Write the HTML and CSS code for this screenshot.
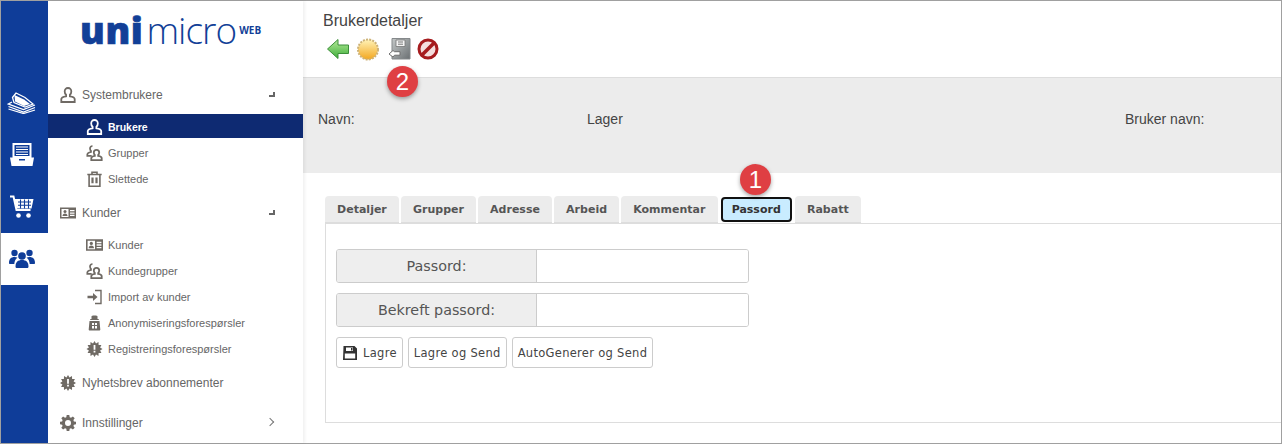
FILE: index.html
```html
<!DOCTYPE html>
<html lang="no">
<head>
<meta charset="utf-8">
<title>Brukerdetaljer</title>
<link rel="stylesheet" href="styles.css">
</head>
<body>
<svg class="defs" width="0" height="0" aria-hidden="true">
  <defs>
    <symbol id="i-user" viewBox="0 0 16 16"><path d="M8 1c-2.100 0-3.300 1.500-3.300 3.400 0 1.500.6 2.700 1.400 3.400v1.500c-2 .3-4.800.9-4.800 2.800v2.900h13.400v-2.900c0-1.900-2.800-2.500-4.800-2.800V7.800c.8-.7 1.400-1.900 1.400-3.400C11.300 2.500 10.100 1 8 1z" fill="none" stroke="currentColor" stroke-width="1.800"/></symbol>
    <symbol id="i-group" viewBox="0 0 16 16"><path d="M6 1c-1.600 0-2.500 1.100-2.500 2.600 0 1 .4 1.900 1 2.400v1C3 7.300 .8 7.900.8 9.500v1.300h4.400" fill="none" stroke="currentColor" stroke-width="1.700"/><path d="M10 4.800c-1.700 0-2.700 1.200-2.700 2.700 0 1.100.4 2 1 2.500v.9c-1.600.3-3.500.8-3.500 2.300v1.900h10.400v-1.900c0-1.500-1.900-2-3.500-2.300V10c.6-.5 1-1.400 1-2.500C12.700 6 11.700 4.800 10 4.800z" fill="none" stroke="currentColor" stroke-width="1.800"/></symbol>
    <symbol id="i-trash" viewBox="0 0 16 16"><path d="M.8 3.500h14.400M5.500 3.500V1.200h5v2.300M2.600 3.500v11.700h10.800V3.500" fill="none" stroke="currentColor" stroke-width="1.600"/><path d="M6 6.500v5.800M10 6.500v5.800" stroke="currentColor" stroke-width="2.200"/></symbol>
    <symbol id="i-card" viewBox="0 0 16 12"><path fill="currentColor" fill-rule="evenodd" d="M0 .5h16v11H0zM1.500 2v8h7V2zM10 3v1.300h4.500V3zm0 2.400v1.300h4.500V5.400zm0 2.400v1.300h4.500V7.800z"/><circle cx="5" cy="4.500" r="1.500" fill="currentColor"/><path fill="currentColor" d="M2.500 9c0-1.600 1-2.500 2.500-2.500S7.500 7.400 7.500 9z"/></symbol>
    <symbol id="i-import" viewBox="0 0 16 16"><path d="M8.500 1.500h6v13h-6" fill="none" stroke="currentColor" stroke-width="1.400"/><path fill="currentColor" d="M1 6.800h5.500V4L11 8l-4.500 4V9.200H1z"/></symbol>
    <symbol id="i-anon" viewBox="0 0 16 16"><path fill="currentColor" fill-rule="evenodd" d="M5 1.500C5 .7 6 .500 8 .500s3 .2 3 1V4h1l.5 1H3.500L4 4h1zM3 6h10l.8 8.500c0 .6-.5 1-1 1H3.200c-.5 0-1-.4-1-1zM5.500 8v2h2V8zm3 0v2h2V8zm-3 3v2.500h2V11zm3 0v2.500h2V11z"/></symbol>
    <symbol id="i-badge" viewBox="0 0 16 16"><path fill="currentColor" fill-rule="evenodd" d="M8 0L9.500 2.400 12 1.070 12.100 3.900 14.930 4 13.600 6.500 16 8 13.600 9.500 14.930 12 12.100 12.100 12 14.930 9.500 13.600 8 16 6.500 13.600 4 14.930 3.900 12.100 1.070 12 2.400 9.500 0 8 2.400 6.500 1.070 4 3.900 3.900 4 1.070 6.500 2.400zM7.100 4v4.800h1.800V4zm0 5.700v1.900h1.800V9.700z"/></symbol>
    <symbol id="i-gear" viewBox="0 0 16 16"><path fill="currentColor" fill-rule="evenodd" d="M6.700 0h2.600l.4 2.200 1.300.5L12.900 1.400l1.800 1.800-1.300 1.900.5 1.300 2.100.3v2.600l-2.100.4-.5 1.300 1.300 1.800-1.800 1.800-1.900-1.300-1.300.5-.4 2.200H6.700l-.4-2.200-1.300-.5-1.900 1.300-1.800-1.800 1.300-1.800-.5-1.300L0 9.300V6.700l2.100-.3.500-1.300-1.300-1.900 1.800-1.800L5 2.700l1.300-.5zM8 5a3 3 0 1 0 0 6 3 3 0 0 0 0-6z"/></symbol>
  </defs>
</svg>
<div class="app">
  <nav class="rail">
    <div class="rail-item rail-first">
      <svg class="rail-icon" viewBox="0 0 30 22" width="30" height="22"><path d="M9 1l9 4.500 8 6.500-8 3L7 10.500 5.500 5.500z" fill="none" stroke="#fff" stroke-width="1.300"/><path d="M7.500 3l9.500 4.500 6 4.500-6 2L8 9.500z" fill="#fff"/><path d="M5 10L1.500 12l15 5.500L28 13M1.500 14.500l15 5.500L28 15.500M1.500 17l15 4.500L28 18" fill="none" stroke="#fff" stroke-width="1.300"/></svg>
    </div>
    <div class="rail-item">
      <svg class="rail-icon" viewBox="0 0 24 24" width="24" height="24"><path d="M3.500 1h17v13h-17z" fill="none" stroke="#fff" stroke-width="2"/><path d="M6 4h12M6 6.500h12M6 9h12M6 11.500h12" stroke="#fff" stroke-width="1.200"/><path d="M0 14.500h24l-1.500 8.500H1.500z" fill="#fff"/><path d="M9 16h6v1.500H9z" fill="#0f3d99"/></svg>
    </div>
    <div class="rail-item">
      <svg class="rail-icon" viewBox="0 0 24 24" width="24" height="24"><path d="M0 1.500h3.500l3 13.500h14" fill="none" stroke="#fff" stroke-width="2"/><path d="M4.500 4h19l-2 9.500h-15z" fill="#fff"/><path d="M8 7h13M8 10.300h13M10.500 4.500v9M14.500 4.500v9M18.500 4.500v9" stroke="#0f3d99" stroke-width="1.100"/><circle cx="8.500" cy="20.500" r="2.300" fill="#fff"/><circle cx="18.500" cy="20.500" r="2.300" fill="#fff"/></svg>
    </div>
    <div class="rail-item rail-active">
      <svg class="rail-icon" viewBox="0 0 26 20" width="26" height="20"><g fill="#0f3d99"><circle cx="5.500" cy="4" r="3.200"/><circle cx="20.500" cy="4" r="3.200"/><path d="M0 14c0-4 2-6 5.500-6 1.300 0 2.300.3 3 .8C6.500 10 5.500 12 5.300 15H1c-.6 0-1-.4-1-1zM26 14c0-4-2-6-5.500-6-1.300 0-2.300.3-3 .8 2 1.200 3 3.200 3.200 6.200H25c.6 0 1-.4 1-1z"/><circle cx="13" cy="7" r="3.800"/><path d="M6.500 17.500c0-4.500 2.500-6.500 6.500-6.500s6.500 2 6.500 6.500c0 1-.6 1.500-1.500 1.500H8c-.9 0-1.500-.5-1.500-1.500z"/></g></svg>
    </div>
  </nav>
  <aside class="sidebar">
    <div class="logo"><span class="logo-uni">uni</span><span class="logo-micro">micro</span><span class="logo-web">WEB</span></div>
    <ul class="menu">
      <li class="group g1"><svg class="ico"><use href="#i-user"/></svg><span>Systembrukere</span><i class="corner"></i></li>
      <li class="sub active"><svg class="ico-s"><use href="#i-user"/></svg><span>Brukere</span></li>
      <li class="sub"><svg class="ico-s"><use href="#i-group"/></svg><span>Grupper</span></li>
      <li class="sub"><svg class="ico-s"><use href="#i-trash"/></svg><span>Slettede</span></li>
      <li class="group g2"><svg class="ico"><use href="#i-card"/></svg><span>Kunder</span><i class="corner"></i></li>
      <li class="sub"><svg class="ico-s"><use href="#i-card"/></svg><span>Kunder</span></li>
      <li class="sub"><svg class="ico-s"><use href="#i-group"/></svg><span>Kundegrupper</span></li>
      <li class="sub"><svg class="ico-s"><use href="#i-import"/></svg><span>Import av kunder</span></li>
      <li class="sub"><svg class="ico-s"><use href="#i-anon"/></svg><span>Anonymiseringsforespørsler</span></li>
      <li class="sub"><svg class="ico-s"><use href="#i-badge"/></svg><span>Registreringsforespørsler</span></li>
      <li class="group g3"><svg class="ico"><use href="#i-badge"/></svg><span>Nyhetsbrev abonnementer</span></li>
      <li class="group g4"><svg class="ico"><use href="#i-gear"/></svg><span>Innstillinger</span><i class="chev"></i></li>
    </ul>
  </aside>
  <main class="main">
    <header class="head">
      <h1>Brukerdetaljer</h1>
      <div class="tools">
        <svg class="tool" viewBox="0 0 24 24" width="24" height="24"><defs><linearGradient id="gg" x1="0" y1="0" x2="0" y2="1"><stop offset="0" stop-color="#b4ea98"/><stop offset="1" stop-color="#3fae3a"/></linearGradient></defs><path d="M1.500 12L12 2.500V8h10.500v8.500H12v5z" fill="url(#gg)" stroke="#3c8f3a"/></svg>
        <svg class="tool" viewBox="0 0 24 24" width="24" height="24"><defs><linearGradient id="yy" x1="0" y1="0" x2="0" y2="1"><stop offset="0" stop-color="#fff3b8"/><stop offset="1" stop-color="#f3a71f"/></linearGradient></defs><circle cx="12" cy="12.500" r="10" fill="url(#yy)" stroke="#cdb277" stroke-width="2" stroke-dasharray="2 1.200"/></svg>
        <svg class="tool tool-safe" viewBox="0 0 24 24" width="24" height="24"><defs><linearGradient id="sg" x1="0" y1="0" x2="1" y2="1"><stop offset="0" stop-color="#c4c8c8"/><stop offset="1" stop-color="#6a6f72"/></linearGradient></defs><path d="M4 1.500h18v20.500H4z" fill="url(#sg)" stroke="#85898b"/><path d="M8 3h9v6.500H8z" fill="#f4f4f4" stroke="#777" stroke-width=".8"/><path d="M10 5h5M10 7.200h5" stroke="#777"/><path d="M1 17l4-3.500 1.500 1.200h5.500v3.500H6.500L5 20z" fill="#fff" stroke="#6e6e6e"/></svg>
        <svg class="tool" viewBox="0 0 24 24" width="24" height="24"><circle cx="12" cy="12" r="9" fill="#f4dede" stroke="#a61c1f" stroke-width="3"/><path d="M5.500 18.500L18.500 5.500" stroke="#a61c1f" stroke-width="3.500"/></svg>
      </div>
    </header>
    <section class="info">
      <span class="f-navn">Navn:</span>
      <span class="f-lager">Lager</span>
      <span class="f-bruker">Bruker navn:</span>
    </section>
    <section class="content">
      <div class="tabs">
        <span class="tab">Detaljer</span>
        <span class="tab">Grupper</span>
        <span class="tab">Adresse</span>
        <span class="tab">Arbeid</span>
        <span class="tab">Kommentar</span>
        <span class="tab tab-active">Passord</span>
        <span class="tab">Rabatt</span>
      </div>
      <div class="panel">
        <div class="field"><label class="field-label">Passord:</label><input class="field-input" type="password"></div>
        <div class="field"><label class="field-label">Bekreft passord:</label><input class="field-input" type="password"></div>
        <div class="buttons">
          <button class="btn" type="button"><svg class="floppy" viewBox="0 0 16 16" width="16" height="16"><path fill="#333" fill-rule="evenodd" d="M1.500 1h11L15 3.500V15H1zM4 2.500V6h7V2.500zM9 3h1.500v2.500H9zM2.800 8.500v5h10.400v-5z"/></svg>Lagre</button>
          <button class="btn" type="button">Lagre og Send</button>
          <button class="btn" type="button">AutoGenerer og Send</button>
        </div>
      </div>
    </section>
  </main>
</div>
<span class="marker m1">1</span>
<span class="marker m2">2</span>
</body>
</html>
```
FILE: styles.css
```css
* { box-sizing: border-box; }
html, body { margin: 0; padding: 0; }
body { width: 1282px; height: 444px; overflow: hidden; background: #fff; font-family: "Liberation Sans", Arial, sans-serif; position: relative; }
.defs { position: absolute; }
.app { display: flex; width: 1282px; height: 444px; border: 1px solid #a0a0a0; }
.rail { width: 47px; flex: none; background: #0f3d99; padding-top: 75px; display: flex; flex-direction: column; }
.rail-item { height: 52px; padding-right: 5px; display: flex; align-items: center; justify-content: center; }
.rail-first { height: 53px; }
.rail-active { background: #fff; }
.sidebar { width: 255px; flex: none; background: #fff; box-shadow: 2px 0 3px rgba(0,0,0,.06); z-index: 1; }
.logo { height: 80px; padding: 8px 0 0 32px; display: flex; align-items: flex-start; color: #123f97; white-space: nowrap; }
.logo-uni { font: 800 37px/42px "Open Sans", sans-serif; letter-spacing: .6px; -webkit-text-stroke: .7px #123f97; }
.logo-micro { font: 300 37px/42px "Open Sans", sans-serif; letter-spacing: -1px; margin-left: 3px; }
.logo-web { font: 700 10px/12px "Open Sans", sans-serif; margin: 15px 0 0 3px; }
.menu { list-style: none; margin: 0; padding: 0; color: #666; }
.menu li { display: flex; align-items: center; position: relative; }
.group { height: 28px; padding-left: 12px; font-size: 12px; }
.group span { margin-left: 6px; }
.sub { height: 26px; padding-left: 38px; font-size: 11px; }
.sub span { margin-left: 5px; }
.g1 { margin-bottom: 5px; }
.g2 { margin-top: 7px; margin-bottom: 5px; }
.g3 { margin-top: 7px; }
.g4 { margin-top: 12px; }
.ico { width: 16px; height: 16px; color: #6f6a64; flex: none; }
.ico-s { width: 17px; height: 16px; color: #6f6a64; flex: none; }
.active { background: #0e2a72; color: #fff; font-weight: 700; font-size: 10.500px; height: 24px; padding-top: 1px; margin-bottom: 2px; }
.active .ico-s { color: #fff; }
.corner { position: absolute; left: 221px; top: 11px; width: 6px; height: 5px; border-right: 2px solid #666; border-bottom: 2px solid #666; }
.chev { position: absolute; left: 219px; top: 10px; width: 6px; height: 6px; border-top: 1.500px solid #777; border-right: 1.500px solid #777; transform: rotate(45deg); }
.main { flex: 1; min-width: 0; background: #fff; }
.head { height: 76px; padding: 11px 0 0 20px; }
h1 { margin: 0; font-size: 16px; line-height: 18px; font-weight: 400; color: #444; }
.tools { display: flex; gap: 6px; margin: 7px 0 0 3px; }
.tool { flex: none; }
.tool-safe { margin: 0 -2px 0 2px; }
.info { height: 96px; background: #ececec; position: relative; border-top: 1px solid #ddd; font-size: 14px; color: #444; display: grid; grid-template-columns: 269px 538px auto; padding: 33px 0 0 15px; align-content: start; }
.content { padding: 22px 0 0 22px; }
.tabs { display: flex; gap: 2px; height: 28px; align-items: flex-end; }
.tab { height: 27px; padding: 0 12.100px; background: #ececec; border-radius: 4px 4px 0 0; border-bottom: 1px solid #ddd; font: 700 11px/27px "DejaVu Sans", sans-serif; color: #555; }
.tab-active { height: 25px; margin: 0 1px 1px; padding: 0 9.100px; border: 2px solid #111; border-radius: 4px; background: #c9ecff; color: #333; line-height: 21px; }
.panel { height: 200px; border: 1px solid #ddd; border-right: 0; padding: 25px 10px 0; }
.field { display: flex; width: 413px; height: 34px; margin-bottom: 10px; border: 1px solid #ccc; border-radius: 3px; overflow: hidden; }
.field-label { width: 200px; flex: none; background: #eee; border-right: 1px solid #ccc; text-align: center; font: 400 14.300px/33px "DejaVu Sans", sans-serif; color: #555; }
.field-input { flex: 1; min-width: 0; border: 0; outline: 0; background: #fff; }
.buttons { display: flex; gap: 5px; }
.btn { height: 31px; padding: 1px 5px 0; background: #fff; border: 1px solid #ccc; border-radius: 3px; font: 400 11.500px/29px "DejaVu Sans", sans-serif; letter-spacing: .3px; color: #444; display: flex; align-items: center; gap: 5px; }
.floppy { flex: none; }
.marker { position: absolute; width: 31px; height: 31px; border-radius: 50%; background: #df3f43; color: #fff; font-size: 24px; line-height: 31px; text-align: center; box-shadow: 0 2px 4px rgba(0,0,0,.35); }
.m1 { left: 740px; top: 164px; }
.m2 { left: 387px; top: 66px; }
```
